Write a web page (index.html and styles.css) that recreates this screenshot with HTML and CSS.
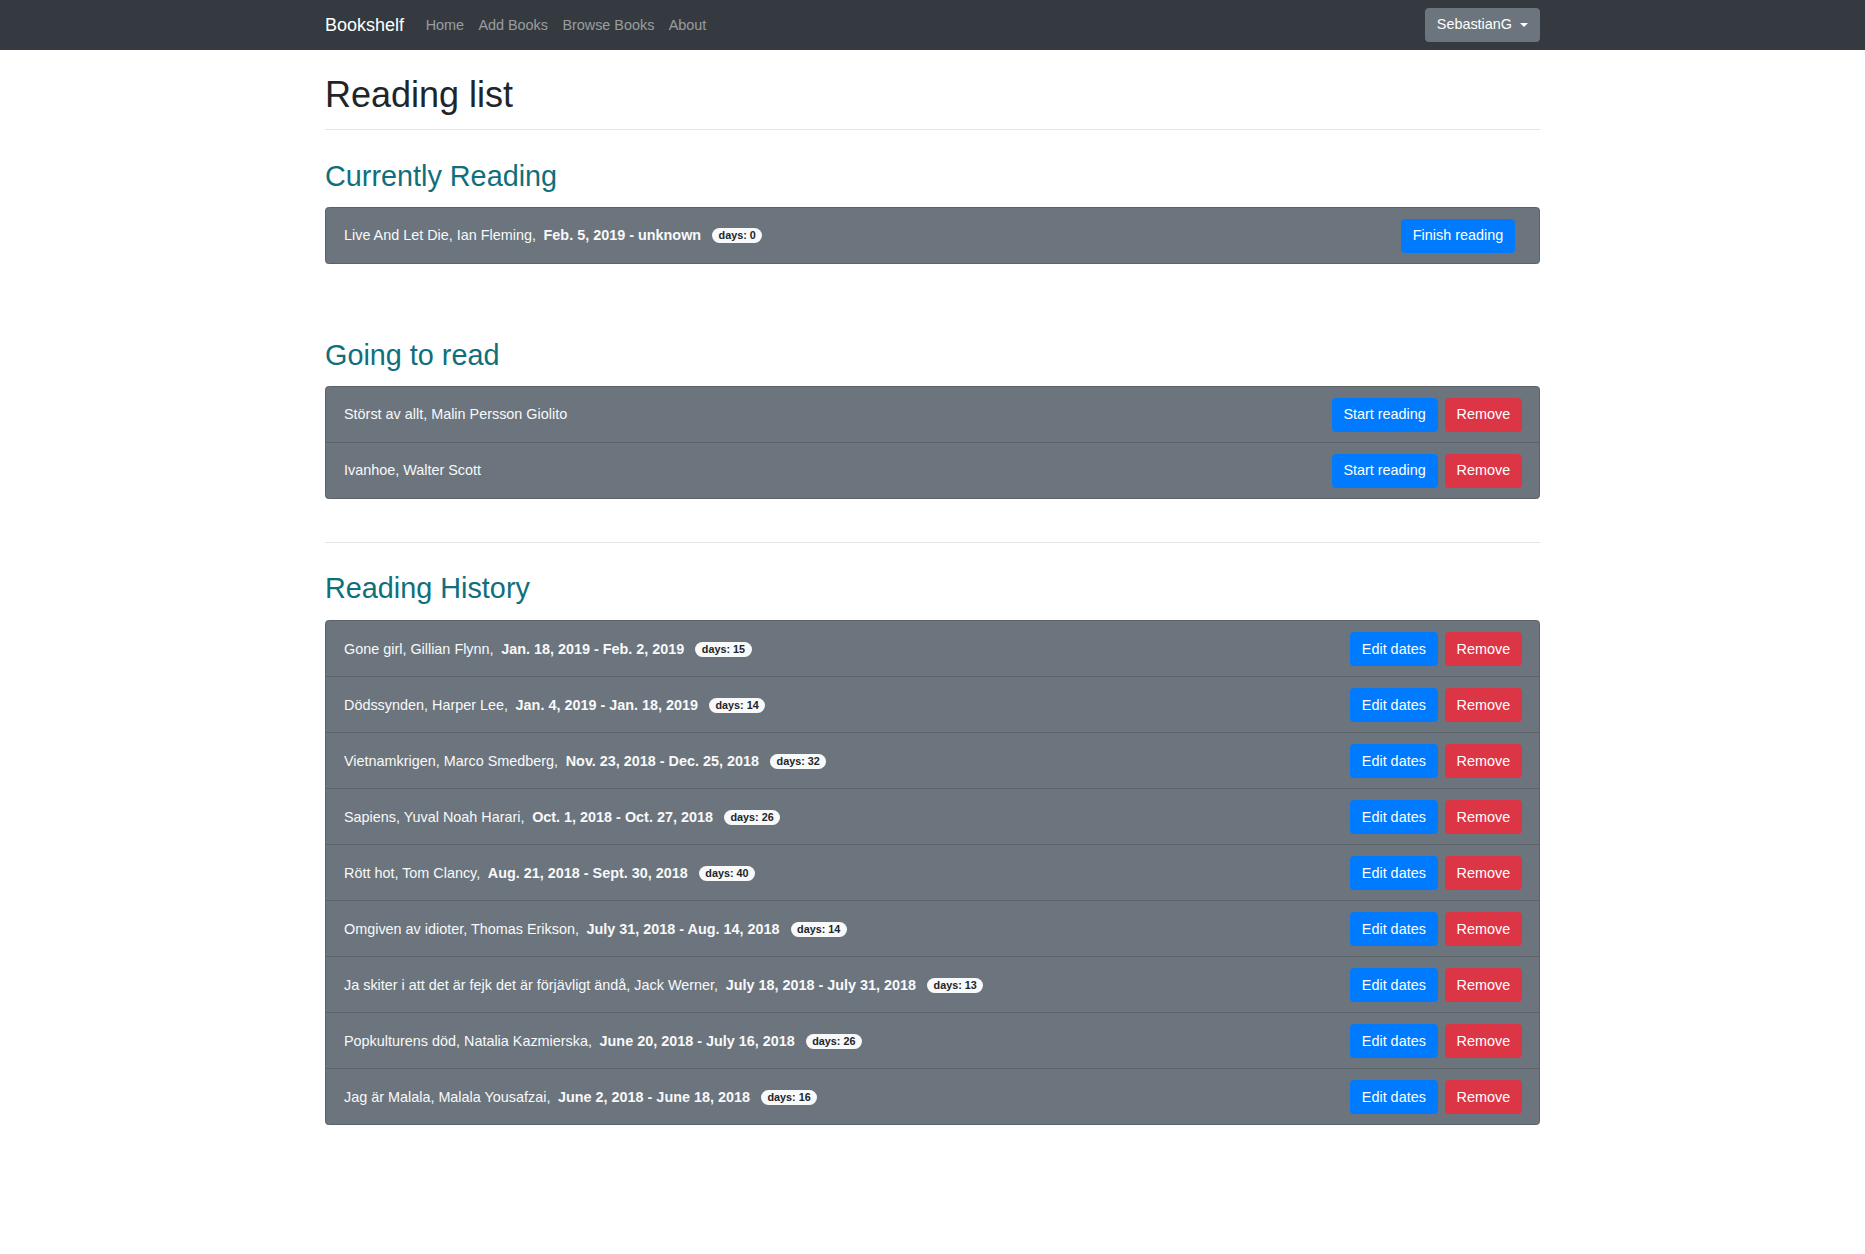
FILE: index.html
```html
<!DOCTYPE html>
<html lang="en">
<head>
<meta charset="utf-8">
<title>Bookshelf</title>
<link rel="stylesheet" href="styles.css">
</head>
<body>
<nav class="navbar">
  <div class="container nav-inner">
    <div class="nav-left">
      <a class="brand" href="#">Bookshelf</a>
      <a class="nav-link" href="#">Home</a>
      <a class="nav-link" href="#">Add Books</a>
      <a class="nav-link" href="#">Browse Books</a>
      <a class="nav-link" href="#">About</a>
    </div>
    <button class="user-btn">SebastianG<span class="caret"></span></button>
  </div>
</nav>

<main class="container main">
  <h1 class="page-title">Reading list</h1>
  <hr class="rule rule-top">

  <section class="section section-current">
    <h3 class="section-title">Currently Reading</h3>
    <ul class="list">
      <li class="item">
        <span class="info">Live And Let Die, Ian Fleming, <b class="dates">Feb. 5, 2019 - unknown</b> <span class="badge">days: 0</span></span>
        <span class="actions"><button class="btn btn-blue btn-finish">Finish reading</button></span>
      </li>
    </ul>
  </section>

  <section class="section section-going">
    <h3 class="section-title">Going to read</h3>
    <ul class="list">
      <li class="item">
        <span class="info">Störst av allt, Malin Persson Giolito</span>
        <span class="actions"><button class="btn btn-blue">Start reading</button><button class="btn btn-red">Remove</button></span>
      </li>
      <li class="item">
        <span class="info">Ivanhoe, Walter Scott</span>
        <span class="actions"><button class="btn btn-blue">Start reading</button><button class="btn btn-red">Remove</button></span>
      </li>
    </ul>
  </section>

  <hr class="rule rule-mid">

  <section class="section section-history">
    <h3 class="section-title">Reading History</h3>
    <ul class="list">
      <li class="item">
        <span class="info">Gone girl, Gillian Flynn, <b class="dates">Jan. 18, 2019 - Feb. 2, 2019</b> <span class="badge">days: 15</span></span>
        <span class="actions"><button class="btn btn-blue">Edit dates</button><button class="btn btn-red">Remove</button></span>
      </li>
      <li class="item">
        <span class="info">Dödssynden, Harper Lee, <b class="dates">Jan. 4, 2019 - Jan. 18, 2019</b> <span class="badge">days: 14</span></span>
        <span class="actions"><button class="btn btn-blue">Edit dates</button><button class="btn btn-red">Remove</button></span>
      </li>
      <li class="item">
        <span class="info">Vietnamkrigen, Marco Smedberg, <b class="dates">Nov. 23, 2018 - Dec. 25, 2018</b> <span class="badge">days: 32</span></span>
        <span class="actions"><button class="btn btn-blue">Edit dates</button><button class="btn btn-red">Remove</button></span>
      </li>
      <li class="item">
        <span class="info">Sapiens, Yuval Noah Harari, <b class="dates">Oct. 1, 2018 - Oct. 27, 2018</b> <span class="badge">days: 26</span></span>
        <span class="actions"><button class="btn btn-blue">Edit dates</button><button class="btn btn-red">Remove</button></span>
      </li>
      <li class="item">
        <span class="info">Rött hot, Tom Clancy, <b class="dates">Aug. 21, 2018 - Sept. 30, 2018</b> <span class="badge">days: 40</span></span>
        <span class="actions"><button class="btn btn-blue">Edit dates</button><button class="btn btn-red">Remove</button></span>
      </li>
      <li class="item">
        <span class="info">Omgiven av idioter, Thomas Erikson, <b class="dates">July 31, 2018 - Aug. 14, 2018</b> <span class="badge">days: 14</span></span>
        <span class="actions"><button class="btn btn-blue">Edit dates</button><button class="btn btn-red">Remove</button></span>
      </li>
      <li class="item">
        <span class="info">Ja skiter i att det är fejk det är förjävligt ändå, Jack Werner, <b class="dates">July 18, 2018 - July 31, 2018</b> <span class="badge">days: 13</span></span>
        <span class="actions"><button class="btn btn-blue">Edit dates</button><button class="btn btn-red">Remove</button></span>
      </li>
      <li class="item">
        <span class="info">Popkulturens död, Natalia Kazmierska, <b class="dates">June 20, 2018 - July 16, 2018</b> <span class="badge">days: 26</span></span>
        <span class="actions"><button class="btn btn-blue">Edit dates</button><button class="btn btn-red">Remove</button></span>
      </li>
      <li class="item">
        <span class="info">Jag är Malala, Malala Yousafzai, <b class="dates">June 2, 2018 - June 18, 2018</b> <span class="badge">days: 16</span></span>
        <span class="actions"><button class="btn btn-blue">Edit dates</button><button class="btn btn-red">Remove</button></span>
      </li>
    </ul>
  </section>
</main>
</body>
</html>
```

FILE: styles.css
```css
* { box-sizing: border-box; }

html, body {
  margin: 0;
  padding: 0;
}

body {
  font-family: "Liberation Sans", Arial, sans-serif;
  font-size: 14.4px;
  line-height: 1.5;
  color: #212529;
  background: #fff;
}

.container {
  width: 1215px;
  margin: 0 auto;
}

/* Navbar */
.navbar {
  background: #343a40;
  height: 50px;
}

.nav-inner {
  height: 50px;
  display: flex;
  align-items: center;
  justify-content: space-between;
}

.nav-left {
  display: flex;
  align-items: center;
}

.brand {
  color: #fff;
  text-decoration: none;
  font-size: 18px;
  line-height: 27px;
  margin-left: 0;
  margin-right: 14.4px;
}

.nav-link {
  color: rgba(255, 255, 255, 0.5);
  text-decoration: none;
  font-size: 14.4px;
  line-height: 21.6px;
  padding: 0 7.2px;
  margin-top: 1px;
}

.user-btn {
  font-family: inherit;
  font-size: 14.4px;
  line-height: 21.6px;
  color: #fff;
  background: #6c757d;
  border: 1px solid #6c757d;
  border-radius: 3.6px;
  height: 34px;
  width: 115px;
  padding: 0 10.8px;
  display: flex;
  align-items: center;
  justify-content: flex-start;
  cursor: pointer;
}

.caret {
  display: inline-block;
  width: 0;
  height: 0;
  margin-left: 8px;
  border-top: 4.5px solid #fff;
  border-left: 4.5px solid transparent;
  border-right: 4.5px solid transparent;
  margin-top: 0;
}

/* Main */
.main {
  padding-top: 23px;
}

.page-title {
  font-size: 36px;
  font-weight: 400;
  line-height: 1.2;
  margin: 0;
}

.rule {
  border: 0;
  border-top: 1px solid rgba(0, 0, 0, 0.1);
  margin: 0;
}

.rule-top { margin-top: 13px; }
.rule-mid { margin-top: 43px; }

.section-title {
  font-size: 28.8px;
  font-weight: 400;
  line-height: 1.2;
  color: #0f6f7c;
  margin: 0 0 13px;
}

.section-current { margin-top: 29px; }
.section-going { margin-top: 74.5px; }
.section-history { margin-top: 28.5px; }

.section-history .section-title { margin-bottom: 14.5px; }

.list {
  list-style: none;
  margin: 0;
  padding: 0;
  background: #6c757d;
  border: 1px solid #5b6268;
  border-radius: 3.6px;
}

.item {
  display: flex;
  align-items: center;
  justify-content: space-between;
  padding: 11px 17px 10px 18px;
  color: #f8f9fa;
}

.item + .item {
  border-top: 1px solid #5b6268;
}

.info {
  white-space: nowrap;
}

.dates {
  font-weight: 700;
  margin-left: 3.6px;
}

.badge {
  display: inline-block;
  background: #f8f9fa;
  color: #212529;
  font-size: 10.8px;
  font-weight: 700;
  line-height: 1;
  padding: 2px 6.5px 2.7px;
  border-radius: 10px;
  margin-left: 7px;
  vertical-align: 1px;
}

.actions {
  display: flex;
  gap: 7.2px;
}

.btn {
  font-family: inherit;
  font-size: 14.4px;
  line-height: 21.6px;
  color: #fff;
  height: 34px;
  padding: 0 10.8px;
  border: 1px solid transparent;
  border-radius: 3.6px;
  cursor: pointer;
}

.btn-blue {
  background: #007bff;
  border-color: #007bff;
}

.btn-red {
  background: #dc3545;
  border-color: #dc3545;
}

.btn-finish {
  margin-right: 7px;
}
```
